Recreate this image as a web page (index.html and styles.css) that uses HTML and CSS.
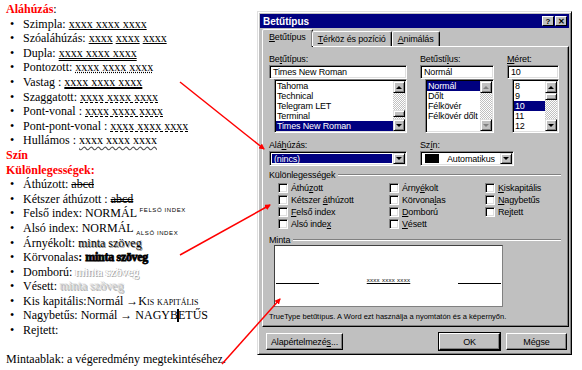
FILE: index.html
```html
<!DOCTYPE html>
<html lang="hu">
<head>
    <meta charset="UTF-8">
    <title>Betűtípus</title>
    <link rel="stylesheet" href="styles.css">
</head>
<body>
<div class="page">
    <!-- bal oldali magyarázó szöveg -->
    <div class="doc">
        <p class="line"><span class="red">Aláhúzás</span>:</p>
        <ul class="bullets">
            <li>Szimpla: <span class="u">xxxx xxxx xxxx</span></li>
            <li>Szóaláhúzás: <span class="u">xxxx</span> <span class="u">xxxx</span> <span class="u">xxxx</span></li>
            <li>Dupla: <span class="u u-double">xxxx xxxx xxxx</span></li>
            <li>Pontozott: <span class="u u-dotted">xxxx xxxx xxxx</span></li>
            <li>Vastag : <span class="u u-thick">xxxx xxxx xxxx</span></li>
            <li>Szaggatott: <span class="u u-dashed">xxxx xxxx xxxx</span></li>
            <li>Pont-vonal : <span class="u u-dashed">xxxx xxxx xxxx</span></li>
            <li>Pont-pont-vonal : <span class="u u-dashed">xxxx xxxx xxxx</span></li>
            <li>Hullámos : <span class="u u-wavy">xxxx xxxx xxxx</span></li>
        </ul>
        <p class="line red">Szín</p>
        <p class="line red">Különlegességek:</p>
        <ul class="bullets">
            <li>Áthúzott: <span class="strike">abcd</span></li>
            <li>Kétszer áthúzott : <span class="strike2">abcd</span></li>
            <li>Felső index: NORMÁL <sup class="tiny">FELSŐ INDEX</sup></li>
            <li>Alsó index: NORMÁL <sub class="tiny">ALSÓ INDEX</sub></li>
            <li>Árnyékolt: <span class="shadowed">minta szöveg</span></li>
            <li>Körvonalas<b>:</b> <span class="outlined">minta szöveg</span></li>
            <li>Domború: <span class="emboss">minta szöveg</span></li>
            <li>Vésett: <span class="engrave">minta szöveg</span></li>
            <li>Kis kapitális:Normál →<span class="smallcaps">Kis kapitális</span></li>
            <li>Nagybetűs: Normál → NAGYB<span class="caret"></span>ETŰS</li>
            <li>Rejtett:</li>
        </ul>
        <p class="line foot">Mintaablak: a végeredmény megtekintéséhez.</p>
    </div>

    <!-- Betűtípus párbeszédablak -->
    <div class="dialog">
        <div class="titlebar">
            <span>Betűtípus</span>
            <div class="title-btns">
                <span class="tbtn">?</span>
                <span class="tbtn">✕</span>
            </div>
        </div>

        <div class="tabs">
            <span class="tab active"><u>B</u>etűtípus</span>
            <span class="tab"><u>T</u>érköz és pozíció</span>
            <span class="tab"><u>A</u>nimálás</span>
        </div>

        <div class="panel">
            <div class="pickers">
                <div class="col col-font">
                    <div class="label">Be<u>t</u>űtípus:</div>
                    <div class="field">Times New Roman</div>
                    <div class="listbox">
                        <div class="items">
                            <div>Tahoma</div>
                            <div>Technical</div>
                            <div>Telegram LET</div>
                            <div>Terminal</div>
                            <div class="sel">Times New Roman</div>
                        </div>
                        <div class="sb">
                            <span class="sb-btn"><i class="tri-up"></i></span>
                            <span class="sb-track"><span class="grow"></span><span class="thumb"></span><span class="gap"></span></span>
                            <span class="sb-btn"><i class="tri-down"></i></span>
                        </div>
                    </div>
                </div>
                <div class="col col-style">
                    <div class="label">Betűstí<u>l</u>us:</div>
                    <div class="field">Normál</div>
                    <div class="listbox">
                        <div class="items">
                            <div class="sel">Normál</div>
                            <div>Dőlt</div>
                            <div>Félkövér</div>
                            <div>Félkövér dőlt</div>
                        </div>
                        <div class="sb">
                            <span class="sb-btn"><i class="tri-up off"></i></span>
                            <span class="sb-track"></span>
                            <span class="sb-btn"><i class="tri-down off"></i></span>
                        </div>
                    </div>
                </div>
                <div class="col col-size">
                    <div class="label"><u>M</u>éret:</div>
                    <div class="field">10</div>
                    <div class="listbox">
                        <div class="items">
                            <div>8</div>
                            <div>9</div>
                            <div class="sel">10</div>
                            <div>11</div>
                            <div>12</div>
                        </div>
                        <div class="sb">
                            <span class="sb-btn"><i class="tri-up"></i></span>
                            <span class="sb-track"><span class="thumb"></span></span>
                            <span class="sb-btn"><i class="tri-down"></i></span>
                        </div>
                    </div>
                </div>
            </div>

            <div class="combos">
                <div class="col col-font">
                    <div class="label">Alá<u>h</u>úzás:</div>
                    <div class="combo">
                        <span class="combo-val sel">(nincs)</span>
                        <span class="sb-btn"><i class="tri-down"></i></span>
                    </div>
                </div>
                <div class="col col-color">
                    <div class="label">Sz<u>í</u>n:</div>
                    <div class="combo">
                        <span class="combo-val"><span class="swatch"></span>Automatikus</span>
                        <span class="sb-btn"><i class="tri-down"></i></span>
                    </div>
                </div>
            </div>

            <div class="group-title"><span>Különlegességek</span></div>
            <div class="checks">
                <label class="chk"><i class="box"></i><span>Áthú<u>z</u>ott</span></label>
                <label class="chk"><i class="box"></i><span>Árny<u>é</u>kolt</span></label>
                <label class="chk"><i class="box"></i><span><u>K</u>iskapitális</span></label>
                <label class="chk"><i class="box"></i><span>Kétszer <u>á</u>thúzott</span></label>
                <label class="chk"><i class="box"></i><span>Körvona<u>l</u>as</span></label>
                <label class="chk"><i class="box"></i><span><u>N</u>agybetűs</span></label>
                <label class="chk"><i class="box"></i><span><u>F</u>első index</span></label>
                <label class="chk"><i class="box"></i><span><u>D</u>omború</span></label>
                <label class="chk"><i class="box"></i><span>Re<u>j</u>tett</span></label>
                <label class="chk"><i class="box"></i><span>Alsó inde<u>x</u></span></label>
                <label class="chk"><i class="box"></i><span><u>V</u>ésett</span></label>
            </div>

            <div class="group-title minta"><span>Minta</span></div>
            <div class="preview">
                <span class="rule"></span>
                <span class="sample">xxxx xxxx xxxx</span>
                <span class="rule"></span>
            </div>
            <div class="note">TrueType betűtípus. A Word ezt használja a nyomtatón és a képernyőn.</div>
        </div>

        <div class="buttons">
            <span class="btn btn-wide">Alapértelmezé<u>s</u>...</span>
            <span class="spacer"></span>
            <span class="btn btn-default">OK</span>
            <span class="btn">Mégse</span>
        </div>
    </div>
</div>

<!-- piros nyilak a kép fölött -->
<svg class="arrows" width="582" height="370" viewBox="0 0 582 370">
    <defs>
        <marker id="head" markerWidth="6" markerHeight="6" refX="5" refY="3" orient="auto" markerUnits="userSpaceOnUse">
            <path d="M0,0 L6,3 L0,6 Z" fill="#ff0000"/>
        </marker>
    </defs>
    <line x1="180" y1="82" x2="264" y2="149" marker-end="url(#head)"/>
    <line x1="180" y1="255" x2="270" y2="205" marker-end="url(#head)"/>
    <line x1="222" y1="364" x2="280" y2="299" marker-end="url(#head)"/>
</svg>
</body>
</html>
```

FILE: styles.css
```css
body {
    margin: 0;
    background: #ffffff;
    color: #000000;
    width: 582px;
    height: 370px;
    overflow: hidden;
}

.page {
    display: flex;
    align-items: flex-start;
}

/* ---- bal oldali dokumentum ---- */

.doc {
    width: 257px;
    box-sizing: border-box;
    padding: 2px 0 0 6px;
    font-family: "Liberation Serif", "Times New Roman", serif;
    font-size: 12px;
    line-height: 14.6px;
    white-space: nowrap;
}

.doc p,
.doc ul {
    margin: 0;
    padding: 0;
}

.red {
    color: #ff0000;
    font-weight: bold;
}

.bullets {
    list-style: none;
}

.bullets li::before {
    content: "•";
    display: inline-block;
    width: 13px;
    margin-left: 4px;
}

.u {
    text-decoration: underline;
    text-underline-offset: 1px;
}

.u-double {
    text-decoration-style: double;
}

.u-dotted {
    text-decoration-style: dotted;
}

.u-thick {
    text-decoration-thickness: 2px;
}

.u-dashed {
    text-decoration-style: dashed;
}

.u-wavy {
    text-decoration-style: wavy;
    text-decoration-color: #555555;
}

.strike {
    text-decoration: line-through;
}

.strike2 {
    text-decoration: line-through double;
}

.tiny {
    font-family: "Liberation Sans", Arial, sans-serif;
    font-size: 6px;
    letter-spacing: 0.6px;
    line-height: 0;
}

.shadowed {
    text-shadow: 1px 1px 0 #909090;
}

.outlined {
    font-weight: bold;
    -webkit-text-stroke: 0.8px #000000;
    letter-spacing: -0.3px;
}

.emboss {
    color: #ffffff;
    text-shadow: 1px 1px 0 #a8a8a8, -1px 0 0 #d0d0d0;
}

.engrave {
    color: #c8c8c8;
    text-shadow: -1px -1px 0 #e8e8e8, 1px 1px 0 #b0b0b0;
}

.smallcaps {
    font-variant: small-caps;
}

.caret {
    display: inline-block;
    width: 2px;
    height: 13px;
    background: #000000;
    vertical-align: -3px;
    margin: 0 -1px;
}

.foot {
    margin-top: 14.6px !important;
}

/* ---- párbeszédablak ---- */

.dialog {
    width: 315px;
    height: 344px;
    margin-top: 11px;
    box-sizing: border-box;
    padding: 2px;
    background: #c0c0c0;
    border: 1px solid;
    border-color: #dfdfdf #000000 #000000 #dfdfdf;
    box-shadow: inset 1px 1px #ffffff, inset -1px -1px #808080;
    font-family: "Liberation Sans", Arial, sans-serif;
    font-size: 9px;
    letter-spacing: -0.15px;
    display: flex;
    flex-direction: column;
}

.dialog u {
    text-underline-offset: 1px;
}

.titlebar {
    height: 14px;
    background: #000080;
    color: #ffffff;
    font-weight: bold;
    font-size: 10px;
    letter-spacing: 0;
    display: flex;
    align-items: center;
    justify-content: space-between;
    padding: 0 2px 0 3px;
}

.title-btns {
    display: flex;
    gap: 1px;
}

.tbtn {
    width: 12px;
    height: 10px;
    box-sizing: border-box;
    background: #c0c0c0;
    color: #000000;
    font-size: 8px;
    font-weight: bold;
    line-height: 9px;
    text-align: center;
    border: 1px solid;
    border-color: #ffffff #000000 #000000 #ffffff;
}

.tabs {
    display: flex;
    align-items: flex-end;
    height: 17px;
    margin-top: 1px;
    padding-left: 2px;
    position: relative;
    z-index: 1;
}

.tab {
    height: 14px;
    padding: 0 5px;
    line-height: 14px;
    border: 1px solid;
    border-bottom: none;
    border-color: #ffffff #000000 transparent #ffffff;
    box-shadow: inset -1px 0 #808080;
    border-radius: 2px 2px 0 0;
}

.tab.active {
    height: 17px;
    line-height: 15px;
    background: #c0c0c0;
    margin-bottom: -1px;
    padding: 0 6px;
    margin-right: -1px;
}

.panel {
    height: 281px;
    margin: 0 0 0 2px;
    box-sizing: border-box;
    border: 1px solid;
    border-color: #ffffff #000000 #000000 #ffffff;
    box-shadow: inset -1px -1px #808080;
    padding: 6px 5px 0 6px;
    display: flex;
    flex-direction: column;
}

.pickers,
.combos {
    display: flex;
    gap: 13px;
}

.col-font {
    width: 138px;
}

.col-style {
    width: 74px;
}

.col-size {
    width: 52px;
}

.col-color {
    width: 94px;
}

.label {
    height: 12px;
    line-height: 12px;
}

.field {
    height: 14px;
    box-sizing: border-box;
    background: #ffffff;
    border: 1px solid;
    border-color: #808080 #ffffff #ffffff #808080;
    box-shadow: inset 1px 1px #000000, inset -1px -1px #dfdfdf;
    padding: 0 3px;
    line-height: 12px;
}

.listbox {
    margin-left: 5px;
    height: 54px;
    box-sizing: border-box;
    background: #ffffff;
    border: 1px solid;
    border-color: #808080 #ffffff #ffffff #808080;
    box-shadow: inset 1px 1px #000000, inset -1px -1px #dfdfdf;
    padding: 1px;
    display: flex;
}

.items {
    flex: 1;
    min-width: 0;
}

.items div {
    height: 10px;
    line-height: 10px;
    padding-left: 1px;
}

.sel {
    background: #000080;
    color: #ffffff;
}

.sb {
    width: 12px;
    display: flex;
    flex-direction: column;
}

.sb-btn {
    width: 12px;
    height: 12px;
    box-sizing: border-box;
    background: #c0c0c0;
    border: 1px solid;
    border-color: #dfdfdf #000000 #000000 #dfdfdf;
    box-shadow: inset 1px 1px #ffffff, inset -1px -1px #808080;
    display: flex;
    align-items: center;
    justify-content: center;
    flex-shrink: 0;
}

.sb-track {
    flex: 1;
    display: flex;
    flex-direction: column;
    background: repeating-conic-gradient(#c0c0c0 0 25%, #ffffff 0 50%) 0 0 / 2px 2px;
}

.sb-track .grow {
    flex: 1;
}

.sb-track .gap {
    height: 2px;
}

.thumb {
    height: 7px;
    box-sizing: border-box;
    background: #c0c0c0;
    border: 1px solid;
    border-color: #dfdfdf #000000 #000000 #dfdfdf;
    box-shadow: inset 1px 1px #ffffff, inset -1px -1px #808080;
}

.tri-up,
.tri-down {
    width: 0;
    height: 0;
    border-left: 3px solid transparent;
    border-right: 3px solid transparent;
}

.tri-up {
    border-bottom: 3px solid #000000;
}

.tri-down {
    border-top: 3px solid #000000;
}

.tri-up.off {
    border-bottom-color: #808080;
}

.tri-down.off {
    border-top-color: #808080;
}

.combos {
    margin-top: 6px;
}

.combo {
    height: 15px;
    box-sizing: border-box;
    background: #ffffff;
    border: 1px solid;
    border-color: #808080 #ffffff #ffffff #808080;
    box-shadow: inset 1px 1px #000000, inset -1px -1px #dfdfdf;
    padding: 1px;
    display: flex;
}

.combo-val {
    flex: 1;
    display: flex;
    align-items: center;
    padding-left: 2px;
    margin: 1px;
}

.combo .sb-btn {
    height: 11px;
}

.swatch {
    width: 14px;
    height: 9px;
    background: #000000;
    margin: 0 8px 0 0;
}

.group-title {
    margin-top: 4px;
    display: flex;
    align-items: center;
    gap: 3px;
    height: 10px;
}

.group-title.minta {
    margin-top: 5px;
}

.group-title::after {
    content: "";
    flex: 1;
    border-top: 1px solid #808080;
    border-bottom: 1px solid #ffffff;
    margin-right: 2px;
}

.checks {
    display: grid;
    grid-template-columns: 111px 96px 1fr;
    grid-auto-rows: 12px;
    padding: 2px 0 0 9px;
}

.chk {
    display: flex;
    align-items: center;
    gap: 3px;
}

.box {
    width: 10px;
    height: 10px;
    box-sizing: border-box;
    background: #ffffff;
    border: 1px solid;
    border-color: #808080 #ffffff #ffffff #808080;
    box-shadow: inset 1px 1px #000000, inset -1px -1px #dfdfdf;
}

.preview {
    margin: 0 0 0 5px;
    width: 229px;
    height: 62px;
    box-sizing: border-box;
    background: #ffffff;
    border: 1px solid;
    border-color: #404040 #808080 #808080 #404040;
    display: flex;
    align-items: center;
    padding: 8px 1px 0;
}

.rule {
    width: 43px;
    border-top: 1px solid #000000;
    margin-top: 6px;
}

.sample {
    flex: 1;
    text-align: center;
    font-size: 6px;
    letter-spacing: 0.3px;
    text-decoration: underline;
}

.note {
    margin-top: 5px;
    font-size: 7.5px;
    letter-spacing: 0;
}

.buttons {
    display: flex;
    gap: 6px;
    margin: 6px 2px 0 6px;
}

.spacer {
    flex: 1;
}

.btn {
    width: 61px;
    height: 17px;
    box-sizing: border-box;
    background: #c0c0c0;
    border: 1px solid;
    border-color: #ffffff #000000 #000000 #ffffff;
    box-shadow: inset -1px -1px #808080;
    display: flex;
    align-items: center;
    justify-content: center;
}

.btn-wide {
    width: 77px;
}

.btn-default {
    outline: 1px solid #000000;
}

/* ---- nyilak ---- */

.arrows {
    position: absolute;
    left: 0;
    top: 0;
    pointer-events: none;
}

.arrows line {
    stroke: #ff0000;
    stroke-width: 1.5;
}
```
